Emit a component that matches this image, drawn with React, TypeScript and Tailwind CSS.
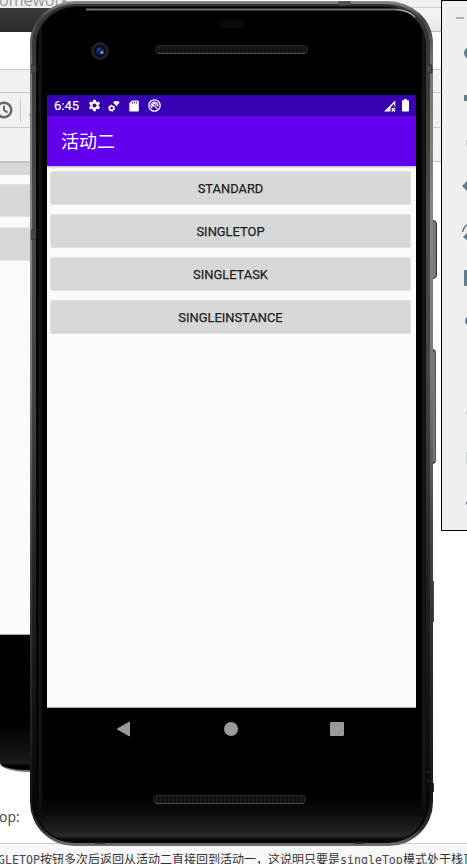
import React from "react";

const MODES = ["STANDARD", "SINGLETOP", "SINGLETASK", "SINGLEINSTANCE"];

function Gear({ className }: { className: string }) {
  return (
    <svg className={className} viewBox="2 2 20 20" fill="white">
      <path d="M19.4 13c.04-.3.06-.6.06-1s-.02-.7-.07-1l2.1-1.6-2-3.5-2.5 1a8 8 0 0 0-1.7-1L15 3.3h-4l-.4 2.6a8 8 0 0 0-1.7 1l-2.5-1-2 3.5L6.6 11a6 6 0 0 0 0 2l-2.2 1.6 2 3.5 2.5-1a8 8 0 0 0 1.7 1l.4 2.6h4l.4-2.6a8 8 0 0 0 1.7-1l2.5 1 2-3.5zM13 15.2a3.2 3.2 0 1 1 0-6.4 3.2 3.2 0 0 1 0 6.4z" transform="translate(-1)" fillRule="evenodd" />
    </svg>
  );
}

function StatusBar() {
  return (
    <div className="flex h-[21px] shrink-0 items-center bg-[#3700b3] pl-[7px] pr-[7px] text-white">
      <span className="w-[34px] text-[13px] leading-[21px] [-webkit-text-stroke:0.2px_white]">6:45</span>
      <Gear className="h-[13px] w-[13px]" />
      <svg className="ml-[7px] h-3 w-3" viewBox="0 0 12 12">
        <circle cx="3.6" cy="8.2" r="2.1" fill="none" stroke="white" strokeWidth="1.5" />
        <circle cx="3.6" cy="8.2" r="3.1" fill="none" stroke="white" strokeWidth="1" strokeDasharray="1.5 1.75" />
        <path d="M5 2.3Q8.3-.2 11.8 2.3L8.4 6.2z" fill="white" />
      </svg>
      <svg className="ml-[9px] h-3 w-[10px]" viewBox="0 0 10 12">
        <path d="M3 .5h6q.8 0 .8.8v9.5q0 .8-.8.8H1.2q-.9 0-.9-.8V3.3z" fill="white" />
        <path d="M3.5 1.6v2M5.5 1.6v2M7.6 1.6v2" stroke="#3700b3" strokeWidth=".8" />
      </svg>
      <svg className="ml-[9px] h-[13px] w-[13px]" viewBox="0 0 13 13" fill="none" stroke="white">
        <circle cx="6.5" cy="6.5" r="5.7" strokeWidth="1.3" />
        <path d="M4.2 9.2A3.4 3.4 0 1 1 9.7 7.6" strokeWidth="1.1" />
        <path d="M4.2 5.2 9.4 9.8M5 7.6A1.8 1.8 0 1 1 8 7" strokeWidth="1.1" />
      </svg>
      <svg className="ml-auto h-[12px] w-[12px]" viewBox="0 0 12 12">
        <path d="M0 11.5 11.2.5V7L10 5.8V3.6L6.5 7.5v4z" fill="white" />
        <path d="m7.7 8 3.4 3.5m0-3.5-3.4 3.5" stroke="white" strokeWidth="1.2" />
      </svg>
      <svg className="ml-[6px] h-[13px] w-[7px]" viewBox="0 0 7 13" fill="white">
        <path d="M2 0h3v1.3h1.2q.8 0 .8.8v9.6q0 .8-.8.8H.8q-.8 0-.8-.8V2.1q0-.8.8-.8H2z" />
      </svg>
    </div>
  );
}

function Speaker() {
  return (
    <div className="h-[9px] w-[153px] rounded-full border border-[#2c2c2c] border-b-[#50504e] bg-[repeating-linear-gradient(90deg,#12110f_0px,#12110f_2px,#23201c_3px,#12110f_4px)]" />
  );
}

function BackgroundPage() {
  return (
    <div className="flex h-[864px] w-[467px] flex-col overflow-hidden bg-white">
      <div className="flex h-[843px] shrink-0 justify-between">
        <div className="flex w-[160px] flex-col">
          <div className="h-2 shrink-0 overflow-hidden bg-[#eeeeee]">
            <div className="-mt-[11px] -ml-px font-['Open_Sans',sans-serif] text-[16px] leading-[22px] text-[#999]">omework</div>
          </div>
          <div className="h-[24px] shrink-0 bg-gradient-to-b from-[#3a3a3a] to-[#2b2928]" />
          <div className="h-[37px] shrink-0 bg-white" />
          <div className="h-[23px] shrink-0 border-t border-[#c8c8c8] bg-[#f1f1f1]" />
          <div className="flex h-[35px] shrink-0 items-center border-t border-[#c8c8c8] bg-[#f1f1f1]">
            <svg className="-ml-[5px] h-[18px] w-[18px]" viewBox="0 0 18 18" fill="none" stroke="#686868">
              <circle cx="9" cy="9" r="7.3" strokeWidth="2.4" />
              <path d="M9 4.5V9l3.5 2.5" strokeWidth="2" />
            </svg>
            <div className="ml-[7px] h-[23px] w-px bg-[#c8c8c8]" />
            <div className="mt-2 ml-[8px] h-px w-[2px] bg-[#777]" />
          </div>
          <div className="h-[34px] shrink-0 border-t border-[#c8c8c8] bg-[#f1f1f1]" />
          <div className="h-[14px] shrink-0 border-t-2 border-[#c1c4c4] bg-[#d5d8d7]" />
          <div className="flex h-[459px] shrink-0 flex-col gap-[10px] bg-[#fafafa] pt-[9px]">
            <div className="h-[33px] border-y border-[#e1e3e3] bg-[#d5d8d7]" />
            <div className="h-[34px] border-y border-[#e1e3e3] bg-[#d5d8d7]" />
          </div>
          <div className="h-[138px] shrink-0 rounded-bl-[28px_9px] border-t border-b-2 border-t-[#aaa] border-b-[#777] bg-[linear-gradient(#000_0%,#000_65%,#1b1b1b_95%,#000_97%)]" />
          <div className="mt-[35px] -ml-px font-['Open_Sans',sans-serif] text-[14px] leading-[20px] text-[#454545]">op:</div>
        </div>
        <div className="flex w-[80px] flex-col">
          <div className="h-[8px] shrink-0 border-b border-[#ccc] bg-[#f1f1f1]" />
          <div className="h-[24px] shrink-0 border-b border-[#bbb] bg-gradient-to-b from-[#f5f5f5] to-[#e8e8e8]" />
          <div className="h-[37px] shrink-0" />
          <div className="h-[23px] shrink-0 border-t border-[#c8c8c8] bg-[#f1f1f1]" />
          <div className="h-[35px] shrink-0 border-t border-[#c8c8c8] bg-[#f1f1f1]" />
          <div className="h-[35px] shrink-0 border-y border-[#c8c8c8] bg-[#f1f1f1]" />
        </div>
      </div>
      <div className="h-[21px] shrink-0 overflow-hidden border-t border-[#ccc] bg-[#f8f8f8]">
        <div className="-ml-[2px] flex pt-[8px] font-['DejaVu_Sans_Mono','Noto_Sans_CJK_SC',monospace] text-[12px] leading-[17px] whitespace-nowrap text-[#333]">
          <span className="w-[42px] shrink-0 text-[11.6px] text-[#4c435c]">GLETOP</span>
          <span className="w-[300px] shrink-0">按钮多次后返回从活动二直接回到活动一，这说明只要是</span>
          <span className="w-[63px] shrink-0 text-[11.6px] text-[#454545]">singleTop</span>
          <span>模式处于栈顶</span>
        </div>
      </div>
    </div>
  );
}

function Phone() {
  return (
    <div className="absolute top-[1px] left-[30px] h-[845px] w-[407px]">
      <div className="absolute top-[219px] right-0 h-[59px] w-[8px] rounded-r-sm border border-[#333] bg-[#777]" />
      <div className="absolute top-[348px] right-[1px] h-[115px] w-[8px] rounded-r-sm border-y-2 border-r border-y-[#333] border-r-[#555] bg-[#777]" />
      <div className="absolute top-[580px] right-[3px] h-[41px] w-[4px] bg-[#484848]" />
      <div className="absolute top-[782px] right-[3px] h-[9px] w-[4px] bg-[#333]" />
      <div className="relative h-[845px] w-[403px] overflow-hidden rounded-t-[46px_42px] rounded-b-[44px] bg-[linear-gradient(#8a8a8a_0%,#444_2%,#777_8%,#858585_25%,#777_45%,#444_63%,#292929_80%,#151515_94%,#303030_98%,#707070_100%)] pt-[3px] pr-[3px] pb-[3px] pl-[2px]">
        <div className="h-full overflow-hidden rounded-t-[44px_40px] rounded-b-[42px] bg-[linear-gradient(#333_0%,#4b4b4b_25%,#444_45%,#222_70%,#080808_95%)] pt-[2px] pr-[4px] pb-[2px] pl-[4px]">
          <div className="flex h-full flex-col rounded-t-[41px_39px] rounded-b-[39px] border-t border-[#161616] bg-[linear-gradient(90deg,#0b0b0b_0px,#000_1px,#171717_4px,#000_7px,#000_384px,#191919_388px,#000_392px)] pl-[11px]">
            <div className="h-[88px] w-[369px] shrink-0">
              <div className="mx-auto mt-[12px] h-[9px] w-[28px] rounded-full bg-[#08080d]" />
              <div className="mt-[14px] flex items-center pl-[44px]">
                <div className="flex h-[18px] w-[18px] shrink-0 items-center justify-center rounded-full border-[3px] border-[#202020] bg-[#070a1c]">
                  <svg className="h-2.5 w-2.5" viewBox="0 0 10 10">
                    <circle cx="5" cy="5" r="4" fill="#171f4d" />
                    <circle cx="3.8" cy="3.4" r="1.4" fill="#34499f" />
                    <circle cx="7" cy="6.4" r="1.7" fill="#6487df" />
                  </svg>
                </div>
                <div className="-mt-1 ml-[46px]"><Speaker /></div>
              </div>
            </div>
            <div className="flex h-[613px] w-[369px] shrink-0 flex-col border-b border-[#aaa] bg-[#fafafa] font-['Roboto','Noto_Sans_CJK_SC',sans-serif]">
              <StatusBar />
              <div className="flex h-[50px] shrink-0 items-center bg-[#6200ee] pl-[14px] text-[18px] text-white shadow-[0_1px_2px_rgba(0,0,0,0.3)]">活动二</div>
              <div className="flex flex-col gap-[9px] pt-[5px] pr-[5px] pl-[3px]">
                {MODES.map((mode) => (
                  <button key={mode} className="h-[34px] rounded-[2px] border border-[#e0e2e1] bg-[#d6d8d7] pt-[2px] text-[12.9px] text-[#222] [-webkit-text-stroke:0.25px_#222]">{mode}</button>
                ))}
              </div>
            </div>
            <div className="flex h-[41px] w-[369px] shrink-0 items-center justify-between pr-[72px] pl-[69px]">
              <svg className="h-4 w-4" viewBox="0 0 16 16"><path d="M1.2 8 13.5 1v14z" fill="#9a9a9a" stroke="#9a9a9a" strokeLinejoin="round" /></svg>
              <div className="h-[14px] w-[14px] rounded-full bg-[#9a9a9a]" />
              <div className="h-[14px] w-[14px] rounded-[1px] bg-[#9a9a9a]" />
            </div>
            <div className="-ml-[11px] flex-1 rounded-b-[36px] bg-[linear-gradient(transparent_0%,transparent_50%,#0c0c0c_70%,#282828_95%,#070707_98%)] pt-[46px] pl-[117px]">
              <Speaker />
            </div>
          </div>
        </div>
      </div>
      <svg className="absolute top-0 left-0 h-[845px] w-[403px]" viewBox="0 0 403 845" fill="none">
        <path d="M56 8.5H366" stroke="#69716e" strokeWidth="2" />
        <path d="M366 8.5Q378 9 385 16" stroke="#a0aaa7" strokeWidth="1.5" />
        <path d="M1 64h5v8H1M397 64h5v8h-5M1 229h5v9H1" fill="#484848" stroke="#333" />
        <path d="M309 0v4h11V0" fill="#555" stroke="#444" />
        <path d="M65 842h10M324 842h10M397 771h6M397 780h6" stroke="#242424" strokeWidth="1.5" />
      </svg>
    </div>
  );
}

function EmulatorToolbar() {
  return (
    <div className="absolute top-0 left-[441px] h-[531px] w-[40px] border border-black bg-[#efefef]">
      <svg className="h-[529px] w-[38px]" viewBox="442 1 38 529" fill="#607d8b">
        <rect x="456" y="17" width="8" height="2" fill="#a7b4bb" />
        <circle cx="470" cy="53" r="6" />
        <rect x="464" y="95" width="12" height="6" />
        <rect x="466" y="140" width="8" height="6" fill="#cbd0d3" />
        <path d="m462 186 7-7v14z" />
        <path d="M462.500 232q1-6 6-8" fill="none" stroke="#607d8b" strokeWidth="1.5" />
        <path d="m463 237 6-6v11z" />
        <rect x="464" y="270" width="14" height="16" rx="1" />
        <circle cx="470" cy="321" r="5" />
        <circle cx="469" cy="413" r="3" fill="#cbd0d3" />
        <rect x="466" y="452" width="8" height="12" fill="#cbd6d5" />
        <circle cx="468" cy="503" r="2" />
      </svg>
    </div>
  );
}

export default function App() {
  return (
    <div className="relative h-[864px] w-[467px] overflow-hidden">
      <BackgroundPage />
      <Phone />
      <EmulatorToolbar />
    </div>
  );
}
